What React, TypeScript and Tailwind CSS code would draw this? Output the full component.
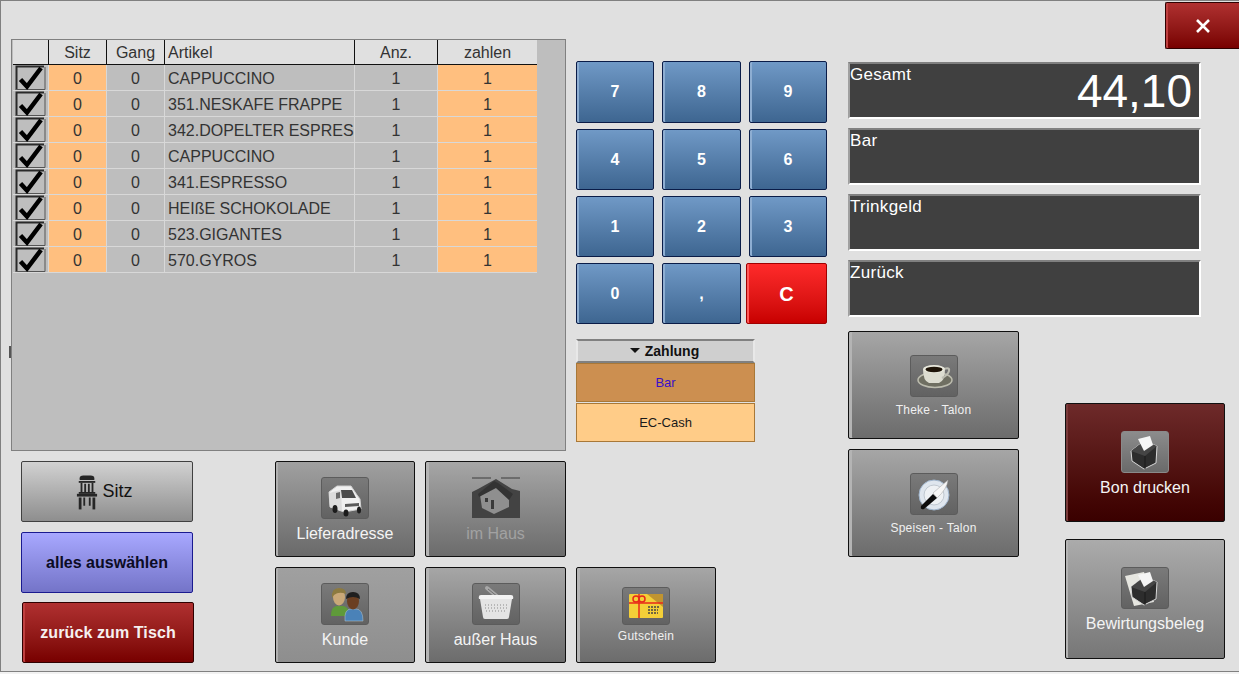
import type { ReactNode } from "react";

const rows = [
  "CAPPUCCINO",
  "351.NESKAFE FRAPPE",
  "342.DOPELTER ESPRESSO",
  "CAPPUCCINO",
  "341.ESPRESSO",
  "HEIßE SCHOKOLADE",
  "523.GIGANTES",
  "570.GYROS",
];

function CheckBox() {
  return (
    <svg width="32" height="26" viewBox="0 0 32 26">
      <path d="M1.5 25V1.5H29" fill="none" stroke="#2a2a2a" strokeWidth="2" />
      <path d="M1 24.5H30V2" fill="none" stroke="#555" strokeWidth="1" />
      <path d="M5.5 14.5 L12 21.5 L26 3" fill="none" stroke="#000" strokeWidth="4.5" strokeLinejoin="miter" />
    </svg>
  );
}

function ChairIcon() {
  return (
    <svg width="22" height="38" viewBox="0 0 24 38" fill="#262626">
      <path d="M4 4 Q4 1 8 1 H16 Q20 1 20 4 V6 H4Z" />
      <rect x="3" y="7" width="18" height="2" />
      <rect x="5" y="9" width="2" height="10" />
      <rect x="9" y="10" width="2" height="9" />
      <rect x="13" y="10" width="2" height="9" />
      <rect x="17" y="9" width="2" height="10" />
      <rect x="3" y="19" width="18" height="2" />
      <rect x="1" y="21" width="22" height="3" />
      <rect x="3" y="25" width="3" height="13" />
      <rect x="18" y="25" width="3" height="13" />
      <rect x="8" y="25" width="2" height="9" />
      <rect x="14" y="25" width="2" height="9" />
    </svg>
  );
}

function VanIcon() {
  return (
    <svg width="46" height="40" viewBox="0 0 46 40">
      <path d="M7 14 L15 8 H29 L35 17 L38 21 L39 31 L22 34 L8 29Z" fill="#f0f0f0" stroke="#cfcfcf" strokeWidth="1" />
      <path d="M7 15 L19 12 L20 33 L8 29Z" fill="#dcdcdc" />
      <path d="M19 12 H30 L34 20 H20Z" fill="#4c4c4c" />
      <path d="M14 15 L18 14 V20 L14 21Z" fill="#6a6a6a" />
      <path d="M23 26 L37 25 V28 L23 29Z" fill="#5a5a5a" />
      <ellipse cx="13" cy="31" rx="2.5" ry="4" fill="#1c1c1c" />
      <ellipse cx="24" cy="35" rx="2.5" ry="3.5" fill="#1c1c1c" />
      <ellipse cx="37" cy="32" rx="2" ry="3.5" fill="#1c1c1c" />
    </svg>
  );
}

function HouseIcon() {
  return (
    <svg width="48" height="42" viewBox="0 0 48 42">
      <path d="M0 1 H19 M29 1 H48" fill="none" stroke="#3d3d3d" strokeWidth="1" />
      <path d="M0 15 L6 12 L24 2 L40 12 L48 14 V41 H0Z" fill="#434343" />
      <path d="M8 18 L22 9 L28 14 L37 21 V30 L22 37 L10 31Z" fill="#8f8f8f" />
      <path d="M22 4 L26 6 L41 17 L37 23 L24 11 L7 20 L6 17Z" fill="#333" />
      <rect x="13" y="21" width="3" height="4" fill="#3a3a3a" />
      <rect x="19" y="23" width="3" height="9" fill="#3a3a3a" />
    </svg>
  );
}

function PeopleIcon() {
  return (
    <svg width="46" height="40" viewBox="0 0 46 40">
      <path d="M9 32 Q9 22 15 22 H21 Q27 22 27 32Z" fill="#5f9a3a" />
      <ellipse cx="17" cy="13" rx="6" ry="8.5" fill="#c9a878" />
      <path d="M10 14 Q9 4 17 4 Q24 4 24 10 Q17 7 12 11Z" fill="#8c7a40" />
      <path d="M23 37 Q22 25 29 25 H34 Q41 25 41 37Z" fill="#4a82b8" stroke="#b8c8d0" strokeWidth="0.5" />
      <ellipse cx="31" cy="17" rx="6" ry="8.5" fill="#6b3f22" />
      <path d="M24 15 Q24 8 31 8 Q38 8 38 15 Q31 11 24 15Z" fill="#1f1f1f" />
    </svg>
  );
}

function BasketIcon() {
  return (
    <svg width="46" height="40" viewBox="0 0 46 40">
      <path d="M14 4 L26 14" stroke="#a8a8a8" strokeWidth="4" strokeLinecap="round" fill="none" />
      <path d="M15 5 L25 13" stroke="#6e6e6e" strokeWidth="1" fill="none" />
      <path d="M8 11 H38 Q41 11 40 15 H6 Q5 11 8 11Z" fill="#f2f2f2" />
      <path d="M7 15 H39 L36 33 Q36 35 34 35 H12 Q10 35 10 33Z" fill="#e4e4e4" />
      <path d="M12 21 H34 M12 24 H34 M13 27 H33" stroke="#8a8a8a" strokeWidth="1" strokeDasharray="1 2" fill="none" />
    </svg>
  );
}

function GiftIcon() {
  return (
    <svg width="46" height="36" viewBox="0 0 46 36">
      <rect x="6" y="6" width="34" height="24" rx="1" fill="#f4cf38" />
      <path d="M24 6 H40 V19 Z" fill="#c09430" />
      <path d="M6 15 H40 M16 6 V30" stroke="#e8281a" strokeWidth="1.5" fill="none" />
      <circle cx="13" cy="11" r="3" fill="none" stroke="#e8281a" strokeWidth="1.5" />
      <circle cx="19" cy="11" r="3" fill="none" stroke="#e8281a" strokeWidth="1.5" />
      <path d="M25 19 H37 M25 22 H35 M25 25 H35" stroke="#444" strokeWidth="1.5" strokeDasharray="2 1" fill="none" />
    </svg>
  );
}

function CupIcon() {
  return (
    <svg width="46" height="40" viewBox="0 0 46 40">
      <ellipse cx="24" cy="24" rx="17" ry="7.5" fill="#6f6f62" stroke="#bcbcae" strokeWidth="1.5" />
      <path d="M12 13 H34 Q34 25 28 27 H18 Q12 25 12 13Z" fill="#dcdcd0" />
      <path d="M33 13 Q39 11 38 15 Q37 19 31 22" fill="none" stroke="#bdbdb2" strokeWidth="2" />
      <ellipse cx="23" cy="13" rx="11" ry="4" fill="#e8e8dc" />
      <ellipse cx="23" cy="13.5" rx="8.5" ry="2.7" fill="#1e1408" />
    </svg>
  );
}

function PlateIcon() {
  return (
    <svg width="46" height="40" viewBox="0 0 46 40">
      <circle cx="23" cy="21" r="15" fill="#dfe6ee" stroke="#9fb4cc" strokeWidth="1" />
      <circle cx="23" cy="21" r="10" fill="#eef1f4" stroke="#c0c8d0" strokeWidth="1" />
      <path d="M22 19 L37 6 Q36 15 26 24Z" fill="#f6f6f6" stroke="#a0a0a0" strokeWidth="0.5" />
      <path d="M10 32 L22 20 L26 24 L13 35 Q9 36 10 32Z" fill="#0c0c0c" />
    </svg>
  );
}

function PrinterIcon({ note }: { note?: boolean }) {
  return (
    <svg width="46" height="40" viewBox="0 0 46 40">
      {note && <path d="M3 8 L22 4 L32 34 L12 38Z" fill="#e6e6e0" />}
      <path d="M9 19 L22 9 L35 14 L34 31 L22 37 L10 29Z" fill="#2d2d2d" stroke="#d8d8d8" strokeWidth="1" />
      <path d="M9 19 L22 9 L35 14 L23 24Z" fill="#454545" />
      <path d="M16 7 L28 4 L31 13 L22 19Z" fill="#f5f5f5" />
      <path d="M23 24 V37" stroke="#1b1b1b" strokeWidth="1" />
    </svg>
  );
}

function IconTile({ children, bright, flat, h = "h-[42px]" }: { children: ReactNode; bright?: boolean; flat?: boolean; h?: string }) {
  if (flat) return <div className={`flex w-[48px] ${h} items-center justify-center`}>{children}</div>;
  return (
    <div
      className={`flex w-[48px] ${h} items-center justify-center overflow-hidden rounded-[3px] border ${
        bright
          ? "border-[#8a8a8a] bg-linear-to-b from-[#8c8c8c] to-[#6a6a6a]"
          : "border-[#5c5c5c] bg-linear-to-b from-[#7a7a7a] to-[#626262]"
      }`}
    >
      {children}
    </div>
  );
}

function ImageButton({
  label,
  icon,
  className,
  small,
  disabled,
  tone = "from-[#a6a6a6] to-[#6c6c6c] shadow-[inset_3px_0_0_#b4b4b4]",
  top,
  labelGap = "mt-[5px]",
}: {
  label: string;
  icon: ReactNode;
  className?: string;
  small?: boolean;
  disabled?: boolean;
  tone?: string;
  top: string;
  labelGap?: string;
}) {
  return (
    <button className={`flex flex-col items-center rounded-[2px] border border-[#101010] bg-linear-to-b ${top} ${tone} ${className ?? ""}`}>
      {icon}
      <span
        className={`${labelGap} ${
          small
            ? "text-[12px] leading-[16px] tracking-[0.25px] text-[#f0f0f0]"
            : disabled
              ? "text-[16px] leading-[20px] text-[#a2a2a2] [text-shadow:1px_1px_0_#7a7a7a]"
              : "text-[16px] leading-[20px] text-[#f4f4f4]"
        }`}
      >
        {label}
      </span>
    </button>
  );
}

function Key({ label, red }: { label: string; red?: boolean }) {
  return (
    <button
      className={
        red
          ? "ml-[-3px] flex items-center justify-center rounded-[2px] border border-[#a00000] bg-linear-to-b from-[#ff2a2a] to-[#c80000] text-[20px] font-bold text-white shadow-[inset_2px_0_0_#ff5a5a]"
          : "flex items-center justify-center rounded-[2px] border border-[#0a1c48] bg-linear-to-b from-[#7099c6] to-[#3e6691] text-[16px] font-bold text-white shadow-[inset_2px_0_0_#8eaed2]"
      }
    >
      {label}
    </button>
  );
}

function Display({ label, value }: { label: string; value?: string }) {
  return (
    <div className="relative h-[57px] w-[353px] border-2 border-t-[#808080] border-r-white border-b-white border-l-[#a0a0a0] bg-[#404040] pt-[1px] text-white">
      <span className="block text-[17px] leading-[20px] tracking-[0.3px]">{label}</span>
      {value && <span className="absolute right-[7px] top-[1px] text-[46px] leading-[52px]">{value}</span>}
    </div>
  );
}

export default function App() {
  return (
    <div className="h-[674px] w-[1239px] overflow-hidden bg-[#f2f2f2] font-['Liberation_Sans',Arial,sans-serif]">
      <div className="flex h-[672px] border-t border-l border-b border-[#808080] bg-[#e0e0e0]">
        {/* left: grid + bottom buttons */}
        <div className="ml-[10px] w-[555px] pt-[38px]">
          <div className="relative h-[412px] border border-[#808080] bg-[#bebebe] pl-[1px]">
            <div className="absolute left-[-3px] top-[306px] h-[12px] w-[2px] bg-[#555]" />
            <div className="grid grid-cols-[36px_58px_58px_190px_83px_99px] text-[16px] leading-[25px] text-[#333]">
              <div className="h-[25px] border-r border-b border-[#111] bg-[#e0e0e0]" />
              <div className="h-[25px] border-r border-b border-[#111] bg-[#e0e0e0] text-center">Sitz</div>
              <div className="h-[25px] border-r border-b border-[#111] bg-[#e0e0e0] text-center">Gang</div>
              <div className="h-[25px] border-r border-b border-[#111] bg-[#e0e0e0] pl-[3px]">Artikel</div>
              <div className="h-[25px] border-r border-b border-[#111] bg-[#e0e0e0] text-center">Anz.</div>
              <div className="h-[25px] border-b border-[#111] bg-[#e0e0e0] text-center">zahlen</div>
              {rows.map((name, i) => (
                <div key={i} className="contents leading-[27px]">
                  <div className="flex h-[26px] items-center justify-center border-r border-b border-[#d8d8d8]">
                    <CheckBox />
                  </div>
                  <div className="h-[26px] border-r border-b border-[#d8d8d8] bg-[#ffbf7f] text-center">0</div>
                  <div className="h-[26px] border-r border-b border-[#d8d8d8] text-center">0</div>
                  <div className="h-[26px] overflow-hidden whitespace-nowrap border-r border-b border-[#d8d8d8] pl-[3px]">{name}</div>
                  <div className="h-[26px] border-r border-b border-[#d8d8d8] text-center">1</div>
                  <div className="h-[26px] border-b border-[#d8d8d8] bg-[#ffbf7f] text-center">1</div>
                </div>
              ))}
            </div>
          </div>

          <div className="mt-[10px] flex">
            <div className="ml-[10px] flex w-[173px] flex-col items-start">
              <button className="flex h-[61px] w-[172px] items-center justify-center gap-[4px] rounded-[2px] border border-[#404040] bg-linear-to-b from-[#d2d2d2] to-[#8e8e8e] pr-[5px] text-[18px] text-[#111]">
                <ChairIcon />
                Sitz
              </button>
              <button className="mt-[10px] h-[61px] w-[172px] rounded-[2px] border border-[#1a1a90] bg-linear-to-b from-[#a8a8ff] to-[#7474c8] text-[16px] font-bold text-[#0c0c24]">
                alles auswählen
              </button>
              <button className="ml-[1px] mt-[9px] h-[61px] w-[172px] rounded-[2px] border border-[#300000] bg-linear-to-b from-[#b03030] to-[#780000] text-[16px] font-bold tracking-[0.1px] text-[#f6f0f0] shadow-[inset_2px_0_0_#c04040]">
                zurück zum Tisch
              </button>
            </div>
            <div className="ml-[81px] grid grid-cols-[140px_141px] grid-rows-[96px_96px] gap-x-[10px] gap-y-[10px]">
              <ImageButton top="pt-[15px]" tone="from-[#a0a0a0] to-[#6a6a6a] shadow-[inset_2px_0_0_#b0b0b0]" label="Lieferadresse" icon={<IconTile><VanIcon /></IconTile>} />
              <ImageButton top="pt-[15px]" disabled label="im Haus" icon={<IconTile flat><HouseIcon /></IconTile>} />
              <ImageButton top="pt-[15px]" tone="from-[#a0a0a0] to-[#8e8e8e] shadow-[inset_2px_0_0_#b0b0b0]" label="Kunde" icon={<IconTile><PeopleIcon /></IconTile>} />
              <ImageButton top="pt-[15px]" label="außer Haus" icon={<IconTile><BasketIcon /></IconTile>} />
            </div>
          </div>
        </div>

        {/* middle: keypad + payment */}
        <div className="ml-[10px] w-[251px] pt-[60px]">
          <div className="grid grid-cols-[78px_79px_78px] grid-rows-[62px_61px_61px_61px] gap-x-[8px] gap-y-[6px]">
            {["7", "8", "9", "4", "5", "6", "1", "2", "3", "0", ","].map((k) => (
              <Key key={k} label={k} />
            ))}
            <Key label="C" red />
          </div>
          <div className="mt-[15px] w-[179px]">
            <div className="flex h-[24px] items-center justify-center gap-[5px] border-2 border-t-[#808080] border-r-[#e8e8e8] border-b-[#808080] border-l-[#e8e8e8] bg-[#cfcfcf] pr-[2px] text-[14px] font-bold text-[#111]">
              <span className="mb-[2px] h-0 w-0 border-x-[5px] border-t-[5px] border-x-transparent border-t-[#111]" />
              Zahlung
            </div>
            <div className="flex h-[39px] items-center justify-center border border-[#a87838] bg-[#cc8f50] text-[13px] text-[#3a10c8]">Bar</div>
            <div className="mt-[1px] flex h-[39px] items-center justify-center border border-[#a87838] bg-[#ffcc88] text-[13px] text-[#1a1a1a]">EC-Cash</div>
          </div>
          <ImageButton
            top="pt-[19px]"
            className="mt-[125px] h-[96px] w-[140px]"
            small
            labelGap="mt-[3px]"
            label="Gutschein"
            icon={<IconTile h="h-[38px]"><GiftIcon /></IconTile>}
          />
        </div>

        {/* right: totals + print */}
        <div className="ml-[21px] w-[391px]">
          <div className="flex justify-end pt-[1px]">
            <button className="flex h-[47px] w-[74px] items-center justify-center rounded-l-[2px] border border-r-0 border-[#300000] bg-linear-to-b from-[#b03030] to-[#780000] shadow-[inset_2px_0_0_#c04040]">
              <svg width="16" height="16" viewBox="0 0 16 16">
                <path d="M2 2 L14 14 M14 2 L2 14" stroke="#fff" strokeWidth="2.6" />
              </svg>
            </button>
          </div>
          <div className="mt-[13px] flex flex-col gap-[9px]">
            <Display label="Gesamt" value="44,10" />
            <Display label="Bar" />
            <Display label="Trinkgeld" />
            <Display label="Zurück" />
          </div>
          <div className="mt-[14px] flex">
            <div className="flex w-[171px] flex-col gap-[10px]">
              <ImageButton top="pt-[23px]" className="h-[108px]" small label="Theke - Talon" icon={<IconTile><CupIcon /></IconTile>} />
              <ImageButton top="pt-[23px]" className="h-[108px]" small label="Speisen - Talon" icon={<IconTile><PlateIcon /></IconTile>} />
            </div>
            <div className="ml-[46px] flex w-[160px] flex-col pt-[72px]">
              <ImageButton
                top="pt-[27px]"
                className="h-[119px]"
                tone="from-[#6e2a2a] to-[#3a0000] shadow-[inset_2px_0_0_#7a3a3a]"
                label="Bon drucken"
                icon={<IconTile bright><PrinterIcon /></IconTile>}
              />
              <ImageButton
                top="pt-[27px]"
                className="mt-[17px] h-[120px]"
                tone="from-[#ababab] to-[#777777] shadow-[inset_2px_0_0_#b4b4b4]"
                label="Bewirtungsbeleg"
                icon={<IconTile><PrinterIcon note /></IconTile>}
              />
            </div>
          </div>
        </div>
      </div>
    </div>
  );
}
